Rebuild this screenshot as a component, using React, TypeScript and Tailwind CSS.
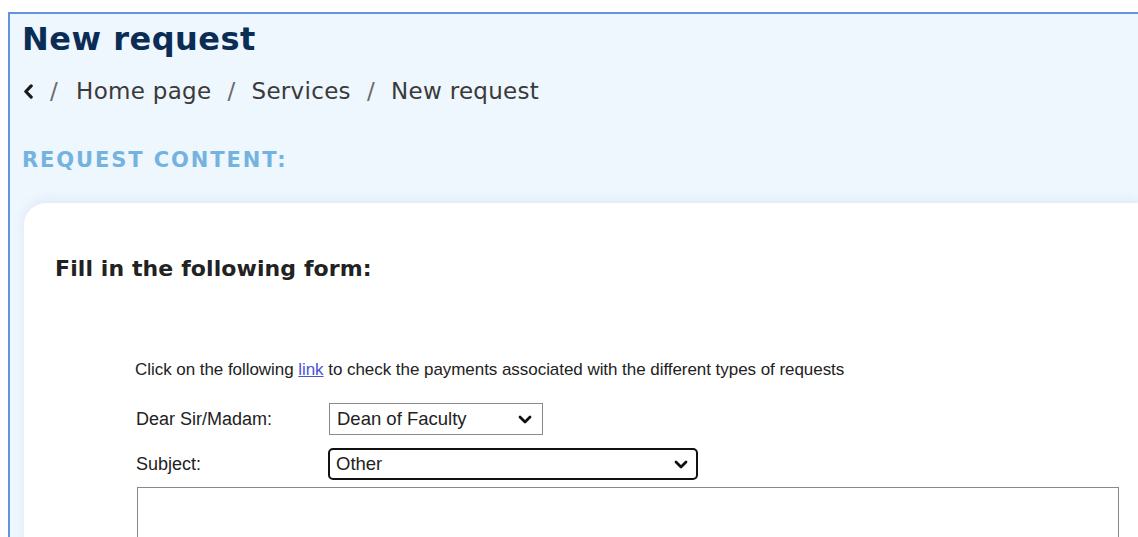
import React from "react";

function Chevron({ className = "" }: { className?: string }) {
  return (
    <svg viewBox="0 0 14 9" className={className} fill="none" stroke="#111" strokeWidth="2.8" strokeLinecap="round" strokeLinejoin="round">
      <path d="M2 2l5 5 5-5" />
    </svg>
  );
}

const heading = { fontFamily: '"DejaVu Sans", "Open Sans", sans-serif' };
const body = { fontFamily: '"Liberation Sans", Arial, sans-serif' };

export default function App() {
  return (
    <div className="h-[537px] overflow-hidden bg-white pl-2 pt-3">
      <div className="h-full border-l-2 border-t-2 border-[#6492dc] bg-[#eef6fe]">
        <div className="pl-3 pt-[5px]" style={heading}>
          <h1 className="text-[32px] font-bold leading-[40px] tracking-[0.5px] text-[#0b2c55]">New request</h1>
          <nav className="mt-[17px] flex items-center text-[23px] leading-[30px] tracking-[0.3px] text-[#3a3a3a]">
            <svg viewBox="0 0 10 14" className="ml-[1px] h-[15px] w-[11px]" fill="none" stroke="#1a1a1a" strokeWidth="3" strokeLinecap="round" strokeLinejoin="round">
              <path d="M7.5 1.8 2.5 7l5 5.2" />
            </svg>
            <span className="ml-[16px] text-[#6a6a6a]">/</span>
            <span className="ml-[18px]">Home page</span>
            <span className="mx-[16px] text-[#6a6a6a]">/</span>
            <span>Services</span>
            <span className="mx-[16px] text-[#6a6a6a]">/</span>
            <span>New request</span>
          </nav>
          <div className="mt-[41px] text-[21px] font-bold leading-[26px] tracking-[1.9px] text-[#74b3df]">REQUEST CONTENT:</div>
        </div>
        <div className="ml-[14px] mt-[30px] h-[400px] rounded-tl-[22px] bg-white shadow-[0_-3px_8px_rgba(205,220,235,0.45)]">
          <div className="pl-[31px] pt-[52px]" style={heading}>
            <div className="text-[22px] font-bold leading-[28px] tracking-[0.1px] text-[#222]">Fill in the following form:</div>
          </div>
          <div className="pl-[111px] pt-[77px] text-[#222]" style={body}>
            <p className="text-[17px] leading-[20px] tracking-[-0.05px]">
              Click on the following <a href="#" className="text-[#4a55d8] underline">link</a> to check the payments associated with the different types of requests
            </p>
            <div className="mt-[23px] flex items-center">
              <span className="w-[194px] pl-[1px] text-[18px]">Dear Sir/Madam:</span>
              <div className="flex h-[32px] w-[214px] items-center justify-between border border-[#8a8a8a] pl-[7px] pr-[10px] text-[18.5px]">
                <span>Dean of Faculty</span>
                <Chevron className="h-[9px] w-[14px]" />
              </div>
            </div>
            <div className="mt-[13px] flex items-center">
              <span className="w-[193px] pl-[1px] text-[18px]">Subject:</span>
              <div className="flex h-[32px] w-[370px] items-center justify-between rounded-[5px] border-2 border-[#111] pl-[6px] pr-[8px] text-[18.5px]">
                <span>Other</span>
                <Chevron className="h-[9px] w-[14px]" />
              </div>
            </div>
            <div className="ml-[2px] mt-[7px] h-[100px] w-[982px] border border-[#8a8a8a]" />
          </div>
        </div>
      </div>
    </div>
  );
}
